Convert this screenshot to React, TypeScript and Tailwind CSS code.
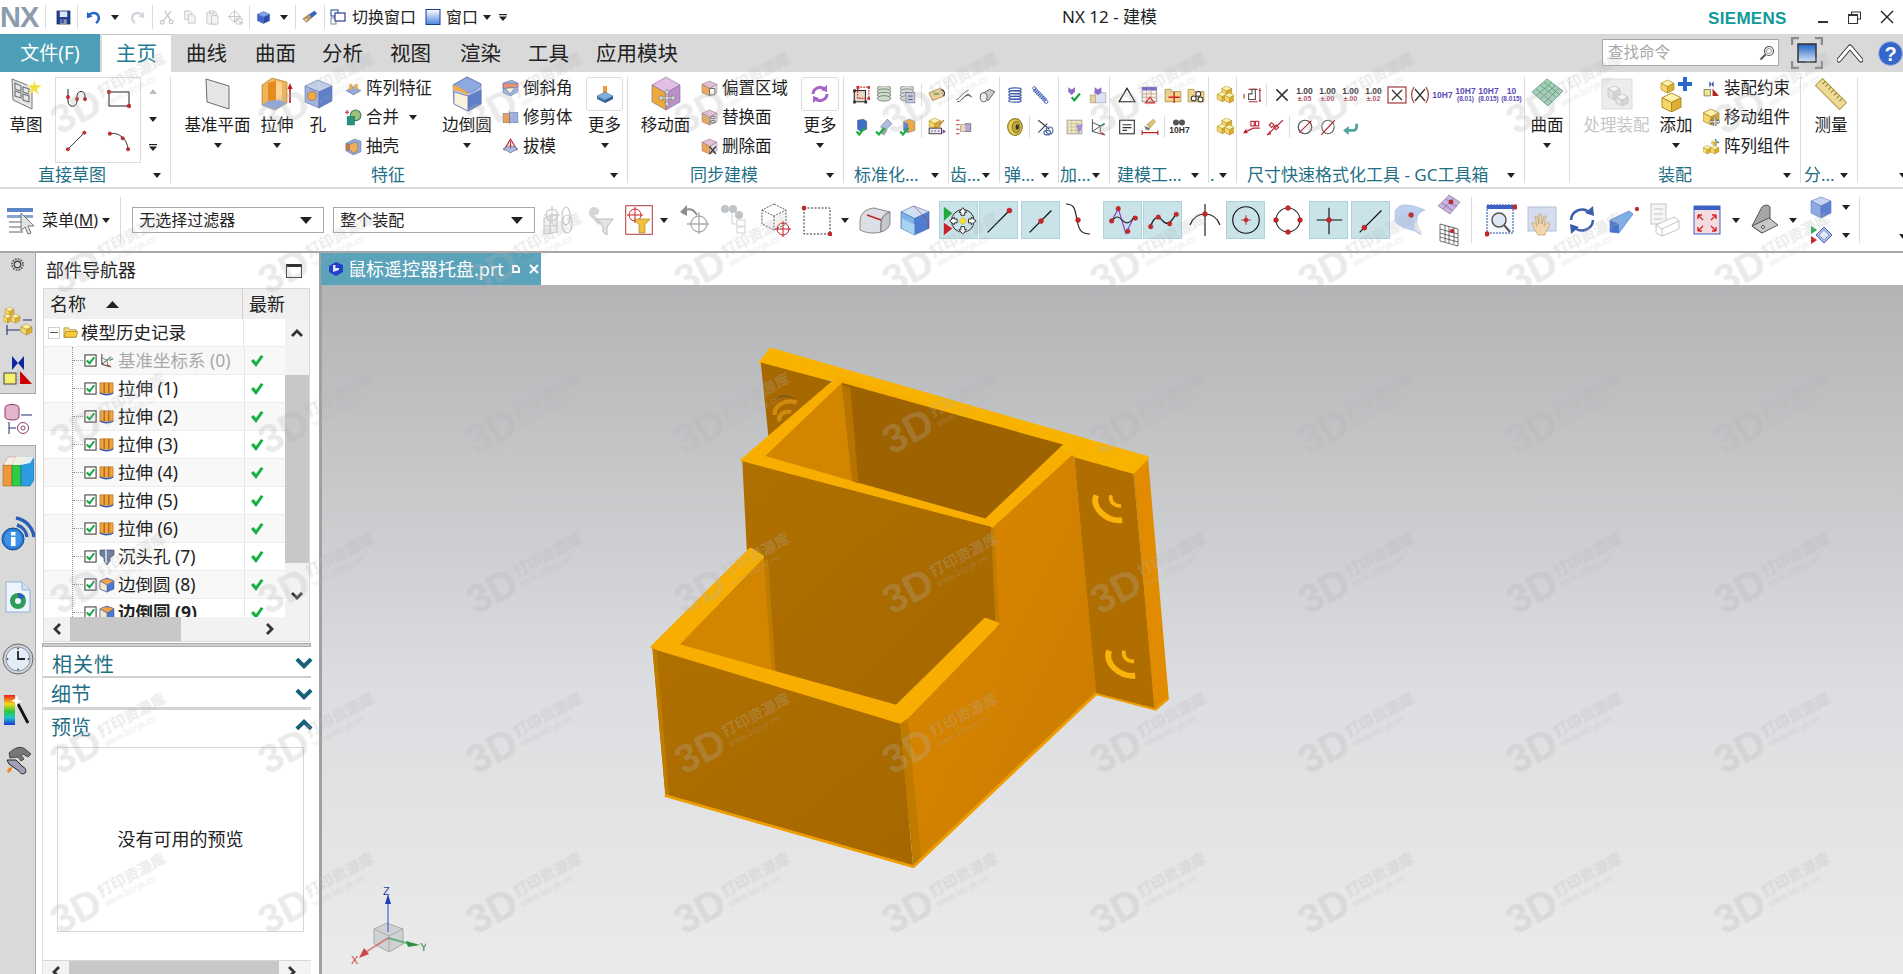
import React, { ReactNode } from "react";

type P = { className?: string; s?: number; h?: number };
const mk =
  (vb: number, def: number, body: ReactNode) =>
  ({ className = "", s = def }: P) =>
    (
      <svg width={s} height={s} viewBox={`0 0 ${vb} ${vb}`} className={"shrink-0 block " + className}>
        {body}
      </svg>
    );
const mr =
  (w: number, h: number, body: ReactNode) =>
  ({ className = "" }: P) =>
    (
      <svg width={w} height={h} viewBox={`0 0 ${w} ${h}`} className={"shrink-0 block " + className}>
        {body}
      </svg>
    );

const cube = (t: string, l: string, r: string, e = "#4a5a80") => (
  <g stroke={e} strokeWidth=".5" strokeLinejoin="round">
    <polygon points="8,1.5 14.5,4.5 8,7.5 1.5,4.5" fill={t} />
    <polygon points="1.5,4.5 8,7.5 8,14.5 1.5,11.5" fill={l} />
    <polygon points="8,7.5 14.5,4.5 14.5,11.5 8,14.5" fill={r} />
  </g>
);
const dot = (x: number, y: number, r = 1.2) => <circle cx={x} cy={y} r={r} fill="#c62828" stroke="#8a1a1a" strokeWidth=".3" />;
const chk = (x = 0, y = 0, c = "#1cae45") => (
  <path d={`M${x + 1} ${y + 4}l2.4 2.6 5-6`} fill="none" stroke={c} strokeWidth="2" />
);

/* ---- title bar ---- */
const Save = mk(16, 15, <g><rect x="1" y="1" width="14" height="14" fill="#1f3f8f" stroke="#13285c" strokeWidth=".6" /><rect x="4" y="1.5" width="8" height="6" fill="#dfe6f2" /><rect x="4.5" y="10" width="7" height="5" fill="#8b97ad" /><rect x="6" y="10.5" width="2" height="3.5" fill="#1f3f8f" /></g>);
const Undo = mk(16, 15, <g><path d="M3 5.5C6 2 12 2.5 13.5 7c.7 2.5-.6 5-2.7 7" fill="none" stroke="#2466c4" strokeWidth="2.6" /><polygon points="1,2 7,7 1,9" fill="#2466c4" /></g>);
const Redo = mk(16, 15, <g><path d="M13 5.5C10 2 4 2.5 2.5 7c-.7 2.5.6 5 2.7 7" fill="none" stroke="#d3d8de" strokeWidth="2.6" /><polygon points="15,2 9,7 15,9" fill="#d3d8de" /></g>);
const Sciss = mk(16, 15, <g fill="none" stroke="#c3c6c9" strokeWidth="1.3"><path d="M13 1L5 11M6 1l6 9" /><circle cx="3.5" cy="13" r="2" /><circle cx="13" cy="12.5" r="2" /></g>);
const CopyI = mk(16, 14, <g fill="#f3f3f3" stroke="#c4c6c8" strokeWidth="1"><path d="M2 1h6l2 2v8H2z" /><path d="M6 5h6l2 2v8H6z" /></g>);
const PasteI = mk(16, 15, <g fill="#f4f4f4" stroke="#c4c6c8" strokeWidth="1"><rect x="2" y="2" width="10" height="13" rx="1" /><rect x="5" y="1" width="4" height="3" /><path d="M7 6h7v9H7z" /></g>);
const PasteT = mk(16, 15, <g fill="none" stroke="#bfc2c5" strokeWidth="1"><circle cx="7" cy="7" r="5" /><path d="M7 0v14M0 7h14" /><path d="M9 9h6v6H9zM10 10l4 4M14 12v2h-2" /></g>);
const TinyCube = mk(16, 15, cube("#7fa6ea", "#3e67c9", "#2a4cac", "#4866b4"));
const Brush = mk(18, 16, <g><polygon points="1,11 8,6 11,10 5,15" fill="#b79a66" stroke="#6b5530" strokeWidth=".5" /><polygon points="8,6 14,2 17,5 11,10" fill="#3a62c0" /><rect x="3" y="11" width="3" height="2" fill="#e3d3ad" /></g>);
const SwitchW = mk(16, 16, <g fill="#fff" strokeWidth="1.1"><rect x="1" y="1" width="7" height="6" stroke="#2d4fa3" /><rect x="1" y="9" width="5" height="6" stroke="#8b8f99" /><rect x="5" y="4" width="10" height="8" stroke="#16328a" /></g>);
const WinI = mk(16, 16, <g><defs><linearGradient id="wg" x1="0" y1="0" x2="0" y2="1"><stop offset="0" stopColor="#fff" /><stop offset="1" stopColor="#4d86e0" /></linearGradient></defs><rect x="1" y="0.5" width="14" height="15" fill="url(#wg)" stroke="#1c3b8d" /></g>);
const Caret = ({ className = "", c = "#222" }: { className?: string; c?: string }) => (
  <svg width="8" height="5" viewBox="0 0 8 5" className={"shrink-0 block " + className}><polygon points="0,0 8,0 4,5" fill={c} /></svg>
);
const More = ({ className = "" }: { className?: string }) => (
  <svg width="8" height="7" viewBox="0 0 8 7" className={"shrink-0 block " + className}><rect width="8" height="1.2" fill="#222" /><polygon points="0,2.5 8,2.5 4,7" fill="#222" /></svg>
);

/* ---- big ribbon icons ---- */
const SketchI = mk(32, 32, <g><polygon points="2,1 22,9 22,31 3,22" fill="#e5e6e7" stroke="#777" strokeWidth="1" /><g fill="none" stroke="#777" strokeWidth="1.2"><polygon points="5,5 11,8 11,13 5,11" /><polygon points="13,9 19,11 19,16 13,14" /><polygon points="5,13 11,15 11,20 5,18" /><polygon points="13,16 19,18 19,24 13,22" /></g><polygon points="24,1 26,7 32,7 27,11 29,17 24,13 19,16 21,10 17,7 23,7" fill="#f4df3b" stroke="#fff" strokeWidth=".5" /></g>);
const DatumI = mk(32, 32, <polygon points="4,1 27,8 27,31 5,24" fill="#e4e6e4" stroke="#6b6f6b" strokeWidth="1" />);
const ExtrI = mk(34, 34, <g><polygon points="2,8 12,1 27,5 27,26 15,33 2,28" fill="#f0b454" stroke="#9c7329" strokeWidth=".6" /><polygon points="8,6 16,4 16,30 8,28" fill="#e58b22" /><polygon points="16,4 22,6 22,28 16,30" fill="#f9d493" /><polygon points="2,28 15,33 27,26 20,23 8,24" fill="#90a8d8" /><path d="M30 26V11" stroke="#c4181e" strokeWidth="1.6" /><polygon points="27.5,12 32.5,12 30,6" fill="#c4181e" /></g>);
const HoleI = mk(30, 30, <g stroke="#5d72ad" strokeWidth=".6"><polygon points="15,1 29,7 16,13 2,7" fill="#c4d2ef" /><polygon points="2,7 16,13 16,29 2,23" fill="#9fb3e0" /><polygon points="16,13 29,7 29,22 16,29" fill="#5f7fc8" /><circle cx="9" cy="17" r="4.5" fill="#f2a93b" stroke="#a55" /></g>);
const BlendI = mr(32, 36, <g stroke="#5d72ad" strokeWidth=".7"><polygon points="16,1 30,8 30,28 17,35 3,28 2,9" fill="#b4c5ea" /><path d="M2 9L16 1l14 7c-1 4-6 7-13 9z" fill="#8ea8e0" /><path d="M2 9c5 1 10 4 15 8v3C12 16 7 14 2.5 15z" fill="#f4ae47" stroke="none" /><polygon points="17,20 30,14 30,28 17,35" fill="#5f7fc8" /><polygon points="3,16 17,20 17,35 3,28" fill="#f8f2df" /></g>);
const MoveFaceI = mr(34, 36, <g stroke="#7b6a9c" strokeWidth=".6"><polygon points="17,1 31,9 17,17 3,9" fill="#e4bfe4" /><polygon points="3,9 17,17 17,34 3,26" fill="#efa93a" /><polygon points="17,17 31,9 31,26 17,34" fill="#bd8fcd" /><path d="M18 13l3 4h-2v4h4v-2l4 3-4 3v-2h-4v4h2l-3 4-3-4h2v-4h-4v2l-4-3 4-3v2h4v-4h-2z" fill="#d4d4d8" stroke="#777" /></g>);
const MoreBI = mk(20, 20, <g><rect x="8" y="2" width="4" height="7" fill="#ef9a3c" /><polygon points="2,12 10,8 18,12 10,16" fill="#7eb0dd" stroke="#456" strokeWidth=".4" /><polygon points="2,12 10,16 10,19 2,15" fill="#3f6fae" /><polygon points="18,12 10,16 10,19 18,15" fill="#2e5a95" /></g>);
const SyncI = mk(20, 20, <g fill="none" stroke="#a565c5" strokeWidth="3"><path d="M3 10a7 7 0 0 1 12-4.5" /><path d="M17 10a7 7 0 0 1-12 4.5" /><polygon points="17,1 17,8 11,6" fill="#a565c5" stroke="none" /><polygon points="3,19 3,12 9,14" fill="#a565c5" stroke="none" /></g>);
const SurfI = mk(32, 32, <g><polygon points="1,14 16,1 32,13 17,28" fill="#a6d0b8" stroke="#5d9a7c" strokeWidth=".8" /><g stroke="#4d9270" strokeWidth=".7"><path d="M5 11l16 13M9 7l16 12M13 4l16 13M5 18L21 4M9 21L25 7M13 25L28 10" /></g></g>);
const ProcI = mk(32, 32, <g><rect x="1" y="1" width="30" height="30" fill="#ececec" stroke="#dcdcdc" /><g stroke="#c5c5c5" strokeWidth=".8"><polygon points="7,11 13,8 19,11 13,14" fill="#f5f5f5" /><polygon points="7,11 13,14 13,22 7,19" fill="#e2e2e2" /><polygon points="13,14 19,11 19,19 13,22" fill="#d5d5d5" /><polygon points="15,19 21,16 27,19 21,22" fill="#f5f5f5" /><polygon points="15,19 21,22 21,28 15,25" fill="#e2e2e2" /><polygon points="21,22 27,19 27,25 21,28" fill="#d5d5d5" /></g></g>);
const yc = (x: number, y: number, k = 1) => (
  <g transform={`translate(${x} ${y}) scale(${k})`} stroke="#a88a2a" strokeWidth=".5">
    <polygon points="5,0 10,2.5 5,5 0,2.5" fill="#fff0a8" />
    <polygon points="0,2.5 5,5 5,10 0,7.5" fill="#f6d765" />
    <polygon points="5,5 10,2.5 10,7.5 5,10" fill="#dcae32" />
  </g>
);
const AddI = mr(34, 36, <g>{yc(2, 4, 1.3)}{yc(3, 17, 1.9)}<path d="M26 1v14M19 8h14" stroke="#2a66c9" strokeWidth="4" /></g>);
const RulerI = mk(32, 32, <g transform="rotate(45 16 16)"><rect x="-1" y="11" width="34" height="10" fill="#eddc98" stroke="#b39c45" /><g stroke="#907a2a" strokeWidth="1">{[3, 7, 11, 15, 19, 23, 27].map((x) => <path key={x} d={`M${x} 11v4`} />)}</g></g>);

/* ---- small ribbon icons ---- */
const PatFeat = mk(16, 17, <g><polygon points="1,10 8,6 15,10 8,14" fill="#8ea9dd" stroke="#556" strokeWidth=".4" /><rect x="4" y="4" width="3" height="5" fill="#eda849" /><rect x="9" y="4" width="3" height="5" fill="#eda849" /></g>);
const Unite = mk(16, 17, <g><path d="M0 3h4M2 1v4" stroke="#c82a2a" strokeWidth="1" /><circle cx="10" cy="6" r="5" fill="#9fc07a" stroke="#2b7a6b" /><rect x="2" y="7" width="7" height="8" fill="#2a8f80" stroke="#175" strokeWidth=".5" /></g>);
const Shell = mk(16, 17, <g stroke="#5c6c95" strokeWidth=".5"><polygon points="1,5 9,1 15,3 15,13 8,16 1,12" fill="#93aada" /><polygon points="4,6 9,4 12,5 12,12 8,14 4,11" fill="#f0ad55" /><polygon points="1,5 4,6 4,11 1,12" fill="#e07a28" /></g>);
const Chamfer = mk(16, 17, <g stroke="#556a9a" strokeWidth=".5"><polygon points="1,3 9,0 15,3 15,11 8,15 1,12" fill="#9fb5e2" /><polygon points="1,3 15,3 15,7 1,8" fill="#e88f7a" /><polygon points="3,8 12,7 8,13" fill="#f6f0d6" /></g>);
const Trim = mk(16, 17, <g stroke="#6a6a8a" strokeWidth=".4"><rect x="1" y="4" width="7" height="9" fill="#eaa253" /><rect x="7" y="3" width="8" height="10" fill="#9fb0df" /><path d="M7 2v13" stroke="#b24" strokeDasharray="2 1" /></g>);
const Draft = mk(16, 17, <g fill="none"><polygon points="8,1 14,11 2,11" stroke="#b24" fill="#f3e7e7" /><polygon points="1,10 8,7 15,10 8,14" fill="#a8bde6" stroke="#557" strokeWidth=".5" /><path d="M8 3v7" stroke="#c33" /></g>);
const hexFace = (e: ReactNode) => (
  <g>
    <g stroke="#8a6c6c" strokeWidth=".5"><polygon points="8,1 15,4 8,8 1,4" fill="#e4c0d8" /><polygon points="1,4 8,8 8,15 1,12" fill="#efa856" /><polygon points="8,8 15,4 15,12 8,15" fill="#e8dbe6" /></g>
    {e}
  </g>
);
const OffsetR = mk(16, 17, hexFace(<path d="M8 8h5v6H8z" fill="#fff" stroke="#555" strokeWidth=".8" />));
const ReplF = mk(16, 17, hexFace(<path d="M9 7h4v2H9zM9 11h4v2H9z" fill="#fff" stroke="#555" strokeWidth=".8" />));
const DelF = mk(16, 17, hexFace(<path d="M8 8l6 7M14 8l-6 7" stroke="#444" strokeWidth="1.5" />));
const AssemC = mk(16, 17, <g><polygon points="6,1 8,4 10,1 10,7 8,4 6,7" fill="#2c4aa8" /><rect x="1" y="9" width="6" height="6" fill="#f1e488" stroke="#555" strokeWidth=".6" /><polygon points="9,15 15,15 9,8" fill="#b5211f" /></g>);
const MoveC = mk(16, 17, <g>{yc(0, 0, 1.5)}<path d="M11 7l2 2h-1v2h2v-1l2 2-2 2v-1h-2v2h1l-2 2-2-2h1v-2H8v1l-2-2 2-2v1h2V9H9z" fill="#ddd" stroke="#333" strokeWidth=".5" /></g>);
const PatC = mk(16, 17, <g>{yc(0, 7, .8)}{yc(7, 7, .8)}<path d="M12 1v6M9 4h6" stroke="#2a66c9" strokeWidth="1.2" />{yc(8, 2, .5)}</g>);
const discs = (a: string, b: string) => [2, 5, 8, 11].map((y) => <ellipse key={y} cx="8" cy={y} rx="6" ry="2.4" fill={a} stroke={b} strokeWidth=".7" />);

const S1 = mk(16, 18, <g><rect x="2" y="4" width="10" height="10" fill="#e8d6c4" stroke="#333" /><rect x="5" y="1" width="10" height="10" fill="none" stroke="#c4282c" strokeDasharray="1.5 1" />{[[1,3],[1,13],[11,13],[4,0],[14,0],[14,10]].map(([x,y],i)=><rect key={i} x={x} y={y} width="2.5" height="2.5" fill={i<3?"#333":"#c4282c"} />)}</g>);
const S2 = mk(16, 18, <g>{discs("#cfdccb", "#62715f")}</g>);
const S3 = mk(16, 18, <g>{discs("#d7dbd6", "#777")}<rect x="7" y="6" width="8" height="9" fill="#c5cbec" stroke="#667" strokeWidth=".5" /><path d="M9 9h4M9 12h4" stroke="#556" /></g>);
const S4 = mk(16, 18, <g><polygon points="1,6 11,2 14,9 4,13" fill="#edd199" stroke="#a07c34" strokeWidth=".7" /><rect x="5" y="6" width="5" height="2" fill="#8a6" /><path d="M12 3c3 1 3 4 2 6" stroke="#222" fill="none" /></g>);
const S5 = mk(16, 18, <g><polygon points="5,2 10,1 13,3 13,10 8,12 5,10" fill="#3e6fc9" stroke="#234" strokeWidth=".4" />{chk(3, 8)}</g>);
const S6 = mk(16, 18, <g><polygon points="5,8 11,1 15,5 9,11" fill="#aebfe6" stroke="#557" strokeWidth=".5" /><rect x="6" y="9" width="4" height="6" fill="#a2a2a2" transform="rotate(30 8 12)" />{chk(0, 8)}</g>);
const S7 = mk(16, 18, <g><polygon points="5,3 10,1 15,3 15,11 9,13 5,11" fill="#efa84b" stroke="#667" strokeWidth=".4" /><polygon points="5,3 9,5 9,13 5,11" fill="#4f7ecb" />{chk(1, 8)}</g>);
const S8 = mk(16, 18, <g>{yc(1, 0, 1)}<rect x="1" y="9" width="11" height="5" fill="#e9e3f4" stroke="#333" strokeWidth=".8" /><path d="M3 11.5h1M6 11.5h1M9 11.5h1" stroke="#333" /><polygon points="13,10 16,12 13,14" fill="#8a3fa6" /><path d="M10 6l4-4" stroke="#b98a2e" strokeWidth="1.5" /></g>);
const S9 = mk(16, 18, <g fill="none" stroke="#555" strokeWidth=".8"><path d="M1 12c3 0 3-3 6-5s3-3 5-3M2 14c3 0 4-2 7-5l4-1 2 2" /><path d="M6 12c2-2 3-4 6-5l2 3" /></g>);
const S10 = mk(16, 18, <g stroke="#444" strokeWidth=".7"><polygon points="2,8 10,3 15,5 9,13" fill="#c8c8c8" /><ellipse cx="5" cy="10" rx="3" ry="4" fill="#eee" /></g>);
const S11 = mk(16, 18, <g><path d="M1 2h3M1 6h3M1 10h3M1 14h3" stroke="#b33" /><path d="M5 6h4v-1h5v7H5z" fill="#b9a6d9" stroke="#443" strokeWidth=".5" /><path d="M5 6h4v6H5z" fill="#ebd9b3" /></g>);
const S12 = mk(16, 18, <g>{[3, 5.5, 8, 10.5, 13].map((y) => <ellipse key={y} cx="8" cy={y} rx="5.5" ry="1.3" fill="none" stroke="#3f5aa8" strokeWidth="1.1" />)}</g>);
const S13 = mk(16, 18, <g fill="none" stroke="#3f5fb5"><path d="M3 3l10 10" strokeWidth="4" strokeDasharray="1.3 .6" /><circle cx="3" cy="2" r="1.5" strokeWidth=".8" /><circle cx="13.5" cy="14" r="1.5" strokeWidth=".8" /></g>);
const S14 = mk(16, 18, <g><ellipse cx="8" cy="8" rx="6.5" ry="7.5" fill="#e7cf5e" stroke="#8a7a22" /><ellipse cx="9" cy="8" rx="3.5" ry="5" fill="#c4aa36" stroke="#8a7a22" /><ellipse cx="10" cy="8" rx="1.5" ry="2.5" fill="#333" /></g>);
const S15 = mk(16, 18, <g fill="none" stroke="#4d6aa8"><path d="M2 2l10 8M2 13L10 5" stroke="#444" /><ellipse cx="12" cy="11" rx="3" ry="3" /><ellipse cx="10" cy="13" rx="3" ry="2" /></g>);
const S16 = mk(16, 18, <g><polygon points="2,1 5,3 8,1 8,5 5,8 2,5" fill="#8a6fc9" />{chk(4, 6, "#1aa84a")}</g>);
const S17 = mk(16, 18, <g><rect x="5" y="6" width="10" height="9" fill="#dce3f2" stroke="#99a" strokeWidth=".5" /><rect x="1" y="8" width="5" height="7" fill="#e8d09a" stroke="#a98" strokeWidth=".5" /><polygon points="5,1 8,3 11,1 11,6 8,8 5,6" fill="#8a6fc9" /></g>);
const S18 = mk(16, 18, <g><rect x="1" y="2" width="13" height="12" fill="#f1e9b8" stroke="#aaa" /><path d="M1 5h13M1 8h13M1 11h13M5 2v12M9 2v12" stroke="#bcb9a2" strokeWidth=".6" /><polygon points="9,6 15,6 13,11 11,14" fill="#a38fd6" /></g>);
const S19 = mk(16, 18, <g fill="none" stroke="#444" strokeWidth=".8"><path d="M3 1v11l11 3M3 12l10-7" /><path d="M3 4l7 3v6" /><path d="M11 7l3-2" stroke="#2a9a4a" strokeWidth="1.5" /><path d="M11 13l3 2" stroke="#c33" strokeWidth="1.5" /></g>);
const S20 = mk(16, 18, <polygon points="8,2 15,14 1,14" fill="#fff" stroke="#222" strokeWidth="1.1" />);
const S21 = mk(16, 18, <g><rect x="1" y="1" width="13" height="13" fill="#fbf4e6" stroke="#777" strokeWidth=".6" /><rect x="1" y="1" width="13" height="3" fill="#7a66c4" /><path d="M1 7h13M1 10h13M5 4v10M9 4v10" stroke="#a77" strokeWidth=".5" /><polygon points="8,10 12,15 4,15" fill="none" stroke="#c22" /></g>);
const S22 = mk(16, 18, <g><path d="M1 3h5l1 2h8v9H1z" fill="#eed58f" stroke="#a98b3d" strokeWidth=".7" /><path d="M9 5v10M4 10h10" stroke="#c22" strokeWidth="1.2" /></g>);
const S23 = mk(16, 18, <g><path d="M1 3h5l1 2h8v9H1z" fill="#eed58f" stroke="#a98b3d" strokeWidth=".7" /><g fill="#fff" stroke="#333" strokeWidth=".9"><circle cx="10" cy="7" r="2.2" /><circle cx="6" cy="11" r="2.2" /><circle cx="12" cy="12" r="2.2" /></g></g>);
const S24 = mk(16, 18, <g><rect x="1.5" y="2" width="13" height="12" fill="#fff" stroke="#333" /><path d="M4 6h8M4 8.5h8M4 11h4" stroke="#333" /></g>);
const S25 = mk(16, 18, <g><polygon points="5,6 11,1 13,3 8,9" fill="#d9c478" stroke="#8a7a33" strokeWidth=".4" /><polygon points="3,7 8,9 7,11 4,10" fill="#777" /><path d="M1 13h14M1 11v4M15 11v4" stroke="#b22" /></g>);
const Binoc = mr(16, 7, <g fill="#555"><circle cx="5" cy="3.5" r="3" /><circle cx="11" cy="3.5" r="3" /></g>);
const S27 = mk(16, 18, <g>{yc(5, 0, .9)}{yc(1, 5, .9)}{yc(7.5, 6, .9)}</g>);
const G1 = mk(16, 18, <g fill="none" stroke="#a33"><path d="M5 3h8M5 14h8M1 7v4M15 2v12M14 4h2M14 13h2" /><path d="M5 12V7h3V3h3v9z" stroke="#555" /></g>);
const G2 = mk(16, 18, <path d="M3 3l10 10M13 3L3 13" stroke="#333" strokeWidth="1.3" />);
const G3 = mk(20, 20, <g><rect x="1" y="2" width="18" height="16" fill="#fff" stroke="#a23a3a" strokeWidth="1.2" /><path d="M5 5l10 10M15 5L5 15" stroke="#333" strokeWidth="1.3" /></g>);
const G4 = mk(20, 20, <g fill="none"><path d="M4 2C1 7 1 13 4 18M16 2c3 5 3 11 0 16" stroke="#a23a3a" strokeWidth="1.2" /><path d="M5 4l10 12M15 4L5 16" stroke="#333" strokeWidth="1.3" /></g>);
const R1 = mk(16, 18, <g fill="none" stroke="#b23"><path d="M1 13l8-4h6M3 10l-2 3 3 0" /><rect x="7" y="3" width="3" height="4" /><rect x="11" y="3" width="3" height="4" /></g>);
const R2 = mk(16, 18, <g fill="none" stroke="#b23"><path d="M1 15L15 2" /><rect x="4" y="5" width="3" height="3" transform="rotate(-45 5 7)" /><rect x="8" y="7" width="3" height="3" transform="rotate(-45 9 9)" /><path d="M1 15l3-1-1-2" /></g>);
const R3 = mk(16, 18, <g fill="none"><circle cx="8" cy="8" r="6" stroke="#555" strokeWidth="1.1" /><path d="M3 13L13 3" stroke="#b23" /><polygon points="13,3 14,2 13,5 11,3" fill="#b23" /></g>);
const R4 = mk(16, 18, <g fill="none"><ellipse cx="8" cy="8" rx="5.5" ry="6" stroke="#666" /><path d="M2 15L14 2" stroke="#b23" /></g>);
const R5 = mk(16, 18, <g><path d="M4 11h6a3 3 0 0 0 3-3V5" fill="none" stroke="#4fa79c" strokeWidth="2.5" /><polygon points="1,11 6,7 6,15" fill="#4fa79c" /></g>);

/* ---- gallery ---- */
const GalA = mk(24, 24, <g><path d="M3 2v12c0 7 9 7 9 0v-5c0-6 8-6 8 0v5" fill="none" stroke="#222" />{dot(3, 10, 1.8)}{dot(12, 12, 1.8)}{dot(20, 12, 1.8)}</g>);
const GalB = mr(24, 20, <g><rect x="2" y="3" width="20" height="14" fill="none" stroke="#222" />{dot(2, 3, 2)}{dot(22, 17, 2)}</g>);
const GalC = mk(24, 22, <g><path d="M2 21L20 3" stroke="#222" />{dot(2, 21, 2)}{dot(20, 3, 2)}</g>);
const GalD = mk(24, 22, <g><path d="M2 4c10-2 19 6 20 17" fill="none" stroke="#222" />{dot(2, 4, 2)}{dot(16, 9, 2)}{dot(22, 21, 2)}</g>);

/* ---- toolbar ---- */
const MenuI = mk(32, 32, <g><rect x="1" y="4" width="26" height="4" fill="#5b87c9" /><rect x="1" y="11" width="26" height="3" fill="#88a4cf" /><path d="M3 18h14M3 23h14M3 28h14" stroke="#999" strokeWidth="1.5" /><polygon points="15,9 15,27 19,23 22,30 25,29 22,22 28,22" fill="#dfe1e3" stroke="#777" /></g>);
const T1 = mk(32, 32, <g fill="none" stroke="#c8cacc" strokeWidth="1.2"><polygon points="1,14 14,10 14,28 1,30" fill="#f1f1f1" /><path d="M1 22h13M7 12v18" /><circle cx="9" cy="11" r="6" /><path d="M9 2v18M1 11h16" /><ellipse cx="23" cy="12" rx="4" ry="9" /><ellipse cx="24" cy="20" rx="5" ry="9" /></g>);
const T2 = mr(26, 30, <g fill="#d4d6d8"><path d="M1 6c2-5 7-5 9-2 3 2 0 7-4 6 3 3 5 5 7 8l-3 2c-3-4-5-6-7-8-2-1-2-3-2-6z" /><polygon points="9,14 25,14 19,22 19,30 15,27 15,22" stroke="#bbb" fill="#e2e3e4" /></g>);
const T3 = mr(28, 30, <g><rect x=".7" y=".7" width="26.6" height="28.6" fill="#fff" stroke="#b23a3a" strokeWidth="1" /><circle cx="10" cy="10" r="6" fill="none" stroke="#c22" /><path d="M10 2v16M2 10h16" stroke="#c22" /><polygon points="9,14 25,14 20,20 20,28 14,28 14,20" fill="#f0bf3d" stroke="#8a6c22" strokeWidth=".5" /></g>);
const T4 = mr(30, 34, <g fill="none" stroke="#aaa" strokeWidth="1.3"><circle cx="20" cy="21" r="8" /><path d="M20 9v22M8 21h22" /><path d="M4 11C7 4 14 5 18 12" stroke="#8d8d8d" strokeWidth="2" /><polygon points="8,2 8,13 1,9" fill="#8d8d8d" stroke="none" /></g>);
const T5 = mr(30, 34, <g><g fill="#c0c4c8"><circle cx="5" cy="6" r="4" /><circle cx="13" cy="6" r="4" /><circle cx="19" cy="12" r="4" /></g><g fill="none" stroke="#cfd1d3"><rect x="17" y="17" width="8" height="6" /><rect x="17" y="24" width="8" height="6" /><path d="M12 9v12h5" /></g></g>);
const T6 = mr(31, 36, <g fill="none" stroke="#333" strokeWidth=".8" strokeDasharray="2 1.2"><polygon points="14,2 26,8 26,22 14,28 2,22 2,8" /><path d="M2 8l12 6 12-6M14 14v14" /><g stroke="#c4181e" strokeDasharray="0" strokeWidth="1"><circle cx="23" cy="27" r="6" /><path d="M23 19v16M15 27h16" /></g></g>);
const T7 = mr(31, 32, <g><rect x="3" y="4" width="26" height="26" fill="none" stroke="#333" strokeDasharray="2 1.5" />{dot(3, 4, 2.2)}{dot(29, 30, 2.2)}</g>);
const T8 = mk(32, 32, <g stroke="#6c6c6c" strokeWidth=".8"><path d="M1 18c0-9 6-13 14-14l16 4c-6 2-9 6-9 13l0 7c-7 2-15 1-21-2z" fill="#dcdfe6" /><path d="M22 21c0-7 3-11 9-13v10c0 5-3 8-9 10z" fill="#c4c7cc" /><path d="M8 11l14 5" stroke="#c4202a" strokeWidth="1.5" /></g>);
const T9 = mk(32, 31, <g stroke="#4466aa" strokeWidth=".6"><polygon points="14,1 30,7 15,14 1,7" fill="#cfe0f5" /><polygon points="1,7 15,14 15,31 1,24" fill="#7fb4ea" /><polygon points="15,14 30,7 30,24 15,31" fill="#4f7ed0" /><polygon points="2,14 15,20 15,31 2,24" fill="#a9d4f0" stroke="none" /><path d="M14 1l15 15v8" stroke="#c22" fill="none" /></g>);
const H1 = mk(38, 36, <g><polygon points="3,6 12,13 3,21" fill="#1fa93f" transform="translate(0 -1)" /><polygon points="3,23 12,29 3,36" fill="#c4242a" transform="translate(0 -1)" /><circle cx="23" cy="20" r="12" fill="none" stroke="#222" /><g fill="#fff" stroke="#111" strokeWidth=".9"><polygon points="23,6 27,11 25,11 25,14 21,14 21,11 19,11" /><polygon points="23,34 27,29 25,29 25,26 21,26 21,29 19,29" /><polygon points="9,20 14,16 14,18 17,18 17,22 14,22 14,24" /><polygon points="37,20 32,16 32,18 29,18 29,22 32,22 32,24" /></g><polygon points="23,16 27,20 23,24 19,20" fill="#f6e131" stroke="#b7a322" strokeWidth=".5" /></g>);
const L1 = mk(38, 36, <g><path d="M7 32L30 9" stroke="#111" strokeWidth="1.3" />{dot(30, 9, 2.7)}</g>);
const L2 = mk(38, 36, <g><path d="M7 32L30 9" stroke="#111" strokeWidth="1.3" />{dot(19, 20, 2.7)}</g>);
const L3 = mr(28, 38, <g><path d="M1 3c9 0 9 6 11 16 2 11 5 14 13 14" fill="none" stroke="#222" strokeWidth="1.2" />{dot(13, 19, 2.5)}</g>);
const L4 = mk(38, 36, <g><path d="M7 20L14 7l8 26 9-18" fill="none" stroke="#8a37c8" strokeWidth="1.2" /><path d="M7 20c6-7 8-4 12 0s8 2 12-5" fill="none" stroke="#222" strokeWidth="1.1" />{dot(7, 20, 2.5)}{dot(14, 7, 2.5)}{dot(24, 31, 2.5)}{dot(32, 17, 2.5)}</g>);
const L5 = mk(38, 36, <g><path d="M6 26c2-8 7-12 10-9s5 7 9 5 6-7 8-10" fill="none" stroke="#222" strokeWidth="1.3" />{dot(6, 26, 2.5)}{dot(14, 16, 2.5)}{dot(26, 23, 2.5)}{dot(33, 13, 2.5)}</g>);
const L6 = mr(32, 38, <g fill="none" stroke="#222" strokeWidth="1.2"><path d="M16 3v32" /><path d="M1 24c3-8 9-11 15-11s12 3 15 11" />{dot(16, 13, 2.5)}</g>);
const L7 = mk(38, 36, <g><circle cx="19" cy="19" r="14" fill="none" stroke="#111" strokeWidth="1.2" /><path d="M19 14v10M14 19h10" stroke="#c22" />{dot(19, 19, 2.2)}</g>);
const L8 = mr(30, 32, <g><circle cx="15" cy="16" r="12" fill="none" stroke="#333" strokeWidth="1.1" />{dot(15, 4, 2.5)}{dot(3, 16, 2.5)}{dot(27, 16, 2.5)}{dot(15, 28, 2.5)}</g>);
const L9 = mk(38, 36, <g><path d="M19 6v28M6 19h27" stroke="#111" strokeWidth="1.2" />{dot(19, 19, 2.7)}</g>);
const L10 = mk(38, 36, <g><path d="M7 32L30 9" stroke="#111" strokeWidth="1.2" />{dot(12, 27, 2.7)}</g>);
const Surf2 = mr(32, 34, <g><path d="M1 8c3-5 7-7 12-6 5 0 11 2 18 5-5 2-8 5-8 10 0 7 2 11 4 15l-6-4c-9-2-17-5-20-10z" fill="#bcd0ed" stroke="#9db5d8" strokeWidth=".5" /><path d="M22 17c2 4 4 10 7 14l-8-4c-1-4 0-7 1-10z" fill="#e3e3e3" />{dot(17, 12, 2.5)}</g>);
const TopA = mr(24, 21, <g><polygon points="1,12 12,1 23,8 13,20" fill="#c9b2de" stroke="#667" strokeWidth=".5" /><path d="M5 9l11 8M9 5l11 8M6 15L17 4" stroke="#6c6ca8" strokeWidth=".7" />{dot(14, 8, 2.2)}</g>);
const TopB = mr(20, 24, <g fill="#fff" stroke="#333" strokeWidth=".7"><polygon points="1,1 19,6 19,23 1,18" /><path d="M1 6l18 5M1 10l18 5M1 14l18 5M6 2v17M10 3v17M15 4v17" />{dot(13, 8, 2)}</g>);
const Z1 = mr(32, 34, <g><rect x="2" y="2" width="26" height="28" fill="#f6f9fd" stroke="#224aa8" strokeDasharray="2 1" /><rect x="2" y="2" width="26" height="4" fill="#3b62c2" /><circle cx="14" cy="17" r="7" fill="#dfe7f2" stroke="#555" strokeWidth="1.5" /><path d="M19 22l6 7" stroke="#555" strokeWidth="2" />{dot(30, 4, 2.4)}{dot(2, 31, 2.4)}</g>);
const Z2 = mr(30, 32, <g><rect x="1" y="3" width="28" height="24" fill="#d5dcee" stroke="#b7bfd8" /><path d="M11 31c-3-5-5-8-6-12l2-1 3 4-2-10h2l2 8 0-10h2l1 10 2-8h2l-2 10 4-4 2 2c-2 4-4 8-5 11z" fill="#f1d6ac" stroke="#a58655" strokeWidth=".5" /></g>);
const Z3 = mr(30, 32, <g fill="none" stroke="#3b5dad" strokeWidth="2.5"><path d="M4 16A11 11 0 0 1 23 9" /><path d="M26 16A11 11 0 0 1 7 23" /><polygon points="26,2 27,12 18,9" fill="#3b5dad" stroke="none" /><polygon points="4,30 3,20 12,23" fill="#3b5dad" stroke="none" /></g>);
const Z4 = mr(30, 32, <g><polygon points="1,16 20,7 24,10 10,29 1,28" fill="#7eb0e8" stroke="#4a6cbf" strokeWidth=".6" /><polygon points="1,16 10,20 10,29 1,28" fill="#4a74cc" />{dot(28, 5, 2)}</g>);
const Z5 = mr(30, 34, <g fill="none" stroke="#c4c6c8"><rect x="1" y="1" width="15" height="20" fill="#f5f5f5" /><path d="M4 6h9M4 11h9M4 16h9" /><polygon points="6,22 24,14 29,18 29,26 12,33 6,30" fill="#fff" /><path d="M6 22l6 4v7M12 26l17-8" /></g>);
const Z6 = mr(28, 32, <g><rect x="1" y="2" width="26" height="28" fill="#f2dce0" stroke="#3b62c2" /><rect x="1" y="2" width="26" height="4" fill="#3b62c2" /><path d="M5 11l5 5M5 11h4M5 11v4M23 11l-5 5M23 11h-4M23 11v4M5 27l5-5M5 27h4M5 27v-4M23 27l-5-5M23 27h-4M23 27v-4" stroke="#d22" strokeWidth="1.4" fill="none" /></g>);
const Z7 = mr(30, 32, <g stroke="#555" strokeWidth="1"><path d="M2 22L12 3c2-2 6-3 8 0l0 12-8 14z" fill="#a4a6a8" /><polygon points="2,22 12,29 28,21 19,14" fill="#c5c7c9" /><circle cx="13" cy="23" r="1.5" fill="#eee" /></g>);
const Z8 = mk(24, 24, <g stroke="#5d7bc0" strokeWidth=".6"><polygon points="12,2 22,6 12,11 2,6" fill="#c4d4f2" /><polygon points="2,6 12,11 12,23 2,18" fill="#8fa9e2" /><polygon points="12,11 22,6 22,18 12,23" fill="#607fcf" /></g>);
const Z9 = mr(24, 20, <g><polygon points="2,1 8,5 2,9" fill="#1fa93f" /><polygon points="2,11 8,15 2,19" fill="#c4242a" /><polygon points="15,2 23,10 15,18 7,10" fill="#aebde6" stroke="#4560ad" /><polygon points="15,5 20,10 15,15 10,10" fill="#e5e9f6" stroke="#4560ad" strokeWidth=".5" /></g>);

/* ---- sidebar ---- */
const Gear = mk(16, 15, <g fill="none" stroke="#444"><circle cx="8" cy="8" r="3.5" strokeWidth="1.5" /><circle cx="8" cy="8" r="6" strokeWidth="1.5" strokeDasharray="1.8 1.3" /></g>);
const SB1 = mk(30, 30, <g>{yc(2, 1, .9)}{yc(0, 8, .9)}{yc(8, 8, .9)}{yc(18, 18, 1.1)}<path d="M4 19v10M4 24h13M20 14h9" stroke="#1d2e6e" strokeWidth="1.1" /></g>);
const SB2 = mk(30, 30, <g><polygon points="9,1 15,8 21,1 21,15 15,8 9,15" fill="#12279b" /><path d="M15 15v15" stroke="#999" strokeDasharray="1.5 1.5" /><rect x="1" y="18" width="12" height="11" fill="#f6f071" stroke="#444" /><polygon points="17,29 29,29 17,16" fill="#c00" /></g>);
const SB3 = mr(30, 32, <g><ellipse cx="9" cy="3.5" rx="7" ry="3" fill="#e3b5cc" stroke="#8d3a6b" /><path d="M2 4v9c0 4 14 4 14 0V4" fill="#e3b5cc" stroke="#8d3a6b" /><path d="M6 18v12M6 24h7M18 11h11" stroke="#1d2e6e" /><circle cx="20" cy="24" r="5.5" fill="#fff" stroke="#87416e" /><circle cx="20" cy="24" r="2" fill="none" stroke="#87416e" /></g>);
const SB4 = mk(32, 32, <g><polygon points="1,10 10,10 10,31 1,31" fill="#f0963b" stroke="#a05c15" strokeWidth=".5" /><polygon points="1,10 6,2 14,2 10,10" fill="#f4efe0" stroke="#a57" strokeWidth=".3" /><polygon points="10,10 19,10 19,31 10,31" fill="#2ecb45" stroke="#187a25" strokeWidth=".5" /><polygon points="10,10 14,2 23,2 19,10" fill="#eef4dc" /><polygon points="19,10 28,3 32,3 32,25 28,31 19,31" fill="#2c9be0" stroke="#135c95" strokeWidth=".5" /><polygon points="19,10 23,2 32,2 28,8" fill="#e6f0f8" /></g>);
const SB5 = mr(34, 36, <g><circle cx="12" cy="23" r="11" fill="#2b7bd3" stroke="#154b95" /><circle cx="12" cy="23" r="8.5" fill="#3f94e8" /><rect x="10" y="21" width="4.5" height="9" fill="#fff" /><rect x="10" y="16" width="4.5" height="3.5" fill="#fff" /><g fill="none" stroke="#2a5fb8" strokeWidth="3.4"><path d="M16 9a14 14 0 0 1 10 12" /><path d="M15 2a22 22 0 0 1 18 19" /></g></g>);
const SB6 = mr(26, 32, <g><path d="M1 1h16l8 8v22H1z" fill="#eef4fb" stroke="#8fb0d4" /><path d="M17 1v8h8" fill="#cfe0f2" stroke="#8fb0d4" /><circle cx="13" cy="20" r="8" fill="#2e9c57" /><path d="M13 12a8 8 0 0 1 7 4l-7 4z" fill="#2a5fb8" /><circle cx="13" cy="20" r="3" fill="#eef4fb" /></g>);
const SB7 = mk(32, 32, <g><circle cx="16" cy="16" r="15" fill="#cfd3d8" stroke="#666" /><circle cx="16" cy="16" r="12" fill="#e4ecf8" stroke="#8a93a4" /><path d="M16 8v8h7" stroke="#222" strokeWidth="1.8" fill="none" /><g fill="#355">{[[16,5.5],[16,26.5],[5.5,16],[26.5,16]].map(([x,y],i)=><circle key={i} cx={x} cy={y} r=".9" />)}</g></g>);
const SB8 = mr(28, 32, <g><defs><linearGradient id="rb" x1="0" y1="0" x2="0" y2="1"><stop offset="0" stopColor="#e3211e" /><stop offset=".3" stopColor="#f4d81e" /><stop offset=".55" stopColor="#2fc33f" /><stop offset=".75" stopColor="#22c4c8" /><stop offset="1" stopColor="#1f34d8" /></linearGradient></defs><rect x="0" y="1" width="11" height="30" fill="url(#rb)" /><path d="M14 10l10 19" stroke="#111" strokeWidth="2.8" /><polygon points="13,1 14,6 19,7 14,9 12,13 11,8 7,7 11,5" fill="#fff" /></g>);
const SB9 = mr(28, 30, <g><path d="M5 8c6-6 12-7 16-4l6 5-3 3-5-3-2 1 3 4-3 2-3-4L6 13z" fill="#777" stroke="#222" strokeWidth=".7" /><path d="M12 15l7 7c2 0 4 4 2 6-3 2-5 0-6-2L5 19 3 15z" fill="#9ea1b8" stroke="#222" /><path d="M4 28c-2-3 1-6 4-6 0 3-1 5-4 6z" fill="#f08622" /></g>);

/* ---- panel ---- */
const Chk = mk(14, 13, <g><rect x="1" y="1" width="12" height="12" fill="#fff" stroke="#222" /><path d="M3 7l3 3 5-6.5" fill="none" stroke="#11a540" strokeWidth="2.2" /></g>);
const Green = mk(14, 14, <path d="M1 7l2.5-2 2.5 3L11 1l2.5 1.5L6 13z" fill="#17b043" />);
const ExtS = mk(16, 15, <g><rect x="1" y="2" width="14" height="11" fill="#f1a53c" stroke="#a0601a" strokeWidth=".6" /><path d="M5.5 2v11M10.5 2v11" stroke="#8a4b12" /><path d="M1 13c4 2 10 2 14 0" stroke="#3357ab" strokeWidth="1.6" fill="none" /></g>);
const CsyS = mk(16, 15, <g fill="none" strokeWidth="1"><path d="M3 1v11l10 3M3 12l10-8" stroke="#333" /><path d="M3 5l6 3v5" stroke="#777" /><path d="M11 8l4-2" stroke="#2a9a4a" strokeWidth="1.4" /><path d="M8 13l4 1" stroke="#c33" strokeWidth="1.4" /></g>);
const CsHole = mk(16, 16, <g><path d="M1 1h14v5l-4 3v3l-3 4-3-4V9L1 6z" fill="#6f7f9f" stroke="#345" strokeWidth=".6" /><path d="M7 1v13" stroke="#c3cede" strokeWidth="2" /></g>);
const BlendS = mk(16, 16, <g stroke="#36528f" strokeWidth=".5"><polygon points="8,1 15,4 15,12 8,15 1,12 1,4" fill="#4c78d0" /><path d="M1 4c4-3 9-3 14 0l-7 4z" fill="#f3a24c" /><polygon points="1,4 8,8 8,15 1,12" fill="#f4e8d2" /></g>);
const Folder = mk(16, 15, <g><path d="M1 3h5l1 2h7v8H1z" fill="#f8dd7d" stroke="#8c6c12" strokeWidth=".6" /><polygon points="3,7 16,7 14,13 1,13" fill="#f7cd3c" stroke="#8c6c12" strokeWidth=".6" /></g>);
const Arrow = ({ d, className = "", w = 2.5, c = "#333", s = 13 }: { d: "u" | "d" | "l" | "r"; className?: string; w?: number; c?: string; s?: number }) => {
  const p = { u: "M2 9l5-5 5 5", d: "M2 5l5 5 5-5", l: "M9 2L4 7l5 5", r: "M5 2l5 5-5 5" }[d];
  return <svg width={s} height={s} viewBox="0 0 14 14" className={"shrink-0 block " + className}><path d={p} fill="none" stroke={c} strokeWidth={w} /></svg>;
};

/* ---- model ---- */
const Model = () => (
  <svg viewBox="0 0 1568 1568" preserveAspectRatio="none" width="580" height="560" className="absolute left-[299px] top-[46px] blur-[0.5px]">
    <defs>
      <linearGradient id="rf" x1="0" y1="0" x2="1" y2="1"><stop offset="0" stopColor="#dc8800" /><stop offset="1" stopColor="#c97b00" /></linearGradient>
      <linearGradient id="ff" x1="0" y1="0" x2="1" y2="1"><stop offset="0" stopColor="#b07000" /><stop offset="1" stopColor="#a66700" /></linearGradient>
    </defs>
    <g strokeLinejoin="round">
      <polygon points="1225,350 1385,395 1445,1060 1280,1015" fill="#b06e00" />
      <polygon points="1385,392 1405,385 1462,1045 1445,1060" fill="#c47e00" />
      <polygon points="1390,392 1422,358 1478,1030 1445,1060" fill="#e18c00" stroke="#e18c00" strokeWidth="6" />
      <polygon points="378,88 405,52 1422,355 1385,395 1215,345 595,130 540,135" fill="#f8b200" stroke="#f8b200" strokeWidth="10" />
      <polygon points="378,88 600,150 400,310" fill="#a86800" />
      <path d="M415 235c0-25 25-45 60-35M430 252c-8-15 10-30 30-25" fill="none" stroke="#d08a10" strokeWidth="12" />
      <path d="M418 190c15-12 35-10 50 0" fill="none" stroke="#6a5326" strokeWidth="3" />
      <polygon points="745,1110 1020,805 1000,545 1210,345 1225,350 1285,1015 795,1500" fill="url(#rf)" />
      <polygon points="328,362 590,130 1215,345 1000,548" fill="#f7ae00" stroke="#f7ae00" strokeWidth="10" />
      <polygon points="390,350 597,145 625,420" fill="#d28600" />
      <polygon points="597,145 1195,318 985,525 625,420" fill="#9f6200" />
      <polygon points="597,150 620,160 642,428 625,420" fill="#b87400" />
      <polygon points="328,365 1000,548 1022,830 985,805 745,1062 405,960 385,640 340,612" fill="url(#ff)" />
      <polygon points="1000,548 1010,555 1022,815 1012,815" fill="#c27c00" />
      <polygon points="385,640 398,640 418,955 405,955" fill="#c07c00" />
      <polygon points="150,880 340,660 385,635 408,955" fill="#d28600" />
      <polygon points="85,885 350,612 382,632 150,880 745,1052 985,808 1018,820 755,1100" fill="#f7ae00" stroke="#f7ae00" strokeWidth="10" />
      <polygon points="85,890 755,1100 790,1500 120,1300" fill="url(#ff)" />
      <polygon points="85,890 96,892 130,1302 120,1300" fill="#c07c00" />
      <polygon points="755,1100 775,1085 812,1480 790,1500" fill="#bf7a00" />
      <polyline points="118,1300 790,1500 1285,1015" fill="none" stroke="#ee9d00" strokeWidth="8" />
      <polyline points="1280,1015 1445,1060 1478,1030" fill="none" stroke="#ee9d00" strokeWidth="6" />
      {[[0, 0], [35, 435]].map(([x, y], i) => (
        <g key={i} transform={`translate(${x} ${y})`} fill="none" stroke="#f9b30a">
          <path d="M1285 460c-15 35 30 75 70 70" strokeWidth="16" />
          <path d="M1325 460c-5 20 10 30 27 30" strokeWidth="10" />
        </g>
      ))}
    </g>
  </svg>
);

const Triad = () => (
  <svg viewBox="0 0 80 80" width="80" height="80" className="absolute left-[24px] top-[601px]">
    <polygon points="28,43 41,37 57,43 57,58 43,66 28,58" fill="#c8cacc" fillOpacity=".8" stroke="#a8abae" />
    <path d="M28 43l15 7v16M43 50l14-7" fill="none" stroke="#a8abae" />
    <path d="M42 12v34" stroke="#3b66d0" strokeOpacity=".6" strokeWidth="2" />
    <polygon points="39,18 45,18 42,8" fill="#1f3fb8" />
    <path d="M42 52l22 6" stroke="#2f9a4a" strokeOpacity=".6" strokeWidth="2" />
    <polygon points="60,55 62,61 74,59" fill="#2f8f44" />
    <path d="M42 52L20 66" stroke="#d04444" strokeOpacity=".6" strokeWidth="2" />
    <polygon points="18,62 23,68 13,72" fill="#d04444" />
    <text x="37" y="9" fontSize="11" fill="#1f3fb8" fontFamily="Liberation Sans">Z</text>
    <text x="74" y="65" fontSize="11" fill="#2f8f44" fontFamily="Liberation Sans">Y</text>
    <text x="5" y="78" fontSize="11" fill="#d04444" fontFamily="Liberation Sans">X</text>
  </svg>
);

/* ---- small pieces of ribbon layout ---- */
const Group = ({ cls, label, lcls, children }: { cls: string; label?: string; lcls?: string; children: ReactNode }) => (
  <div className={"mt-[5px] h-[106px] shrink-0 border-r border-[#dcdcdc] flex flex-col " + cls}>
    <div className="h-[90px] flex items-start">{children}</div>
    <div className="h-[16px] flex items-center">
      {label !== undefined && <span className={"text-[17px] leading-[16px] text-[#1f6f87] whitespace-nowrap " + lcls}>{label}</span>}
      <Caret className="ml-auto mr-[9px]" />
    </div>
  </div>
);
const Big = ({ cls, icon, text, caret = true, muted = false }: { cls: string; icon: ReactNode; text: string; caret?: boolean; muted?: boolean }) => (
  <div className={"flex flex-col items-center shrink-0 " + cls}>
    <div className="h-[34px] flex items-center justify-center">{icon}</div>
    <div className={"h-[28px] flex items-center text-[16.5px] whitespace-nowrap " + (muted ? "text-[#c4c6c8]" : "text-[#1c1c1c]")}>{text}</div>
    {caret && <div className="h-[12px] flex items-center"><Caret /></div>}
  </div>
);
const Small = ({ icon, text, caret }: { icon: ReactNode; text: string; caret?: boolean }) => (
  <div className="h-[22px] flex items-center gap-[4px]">
    <div className="w-[17px] flex justify-center">{icon}</div>
    <span className="text-[16.5px] whitespace-nowrap text-[#1c1c1c]">{text}</span>
    {caret && <Caret className="ml-[6px]" />}
  </div>
);
const SmallCol = ({ cls, children }: { cls: string; children: ReactNode }) => (
  <div className={"flex flex-col gap-[7px] shrink-0 " + cls}>{children}</div>
);
const MoreBtn = ({ cls, icon }: { cls: string; icon: ReactNode }) => (
  <div className={"flex flex-col items-center shrink-0 " + cls}>
    <div className="w-full h-[34px] border border-[#dcdcdc] rounded-[3px] flex items-center justify-center">{icon}</div>
    <div className="h-[28px] flex items-center text-[16.5px] whitespace-nowrap text-[#1c1c1c]">更多</div>
    <div className="h-[12px] flex items-center"><Caret /></div>
  </div>
);
const Cell = ({ children }: { children?: ReactNode }) => <div className="w-[23px] h-[32px] flex items-center justify-center shrink-0">{children}</div>;
const Sep = () => <div className="w-[7px] h-[32px] flex items-center justify-center shrink-0"><div className="w-px h-[22px] bg-[#dcdcdc]" /></div>;
const Rows = ({ cls, children }: { cls: string; children: ReactNode }) => <div className={"flex flex-col pt-[2px] " + cls}>{children}</div>;
const Row = ({ children }: { children: ReactNode }) => <div className="flex h-[32px]">{children}</div>;
const Dim = ({ b, c = "#b0576a" }: { b: string; c?: string }) => (
  <div className="flex flex-col items-center font-['Liberation_Sans'] leading-[8px]">
    <span className="text-[8.5px] font-bold text-[#444]">1.00</span>
    <span className="text-[7px] font-bold" style={{ color: c }}>{b}</span>
  </div>
);
const Fit = ({ a, b }: { a: string; b?: string }) => (
  <div className="flex flex-col items-center font-['Liberation_Sans'] leading-[8px] text-[#5a4db5] text-[8.5px] font-bold">
    <span>{a}</span>
    {b && <span className="text-[6.5px]">{b}</span>}
  </div>
);
const HL = ({ cls, children }: { cls: string; children: ReactNode }) => (
  <div className={"w-[39px] h-[38px] bg-[#c9e3e9] border border-[#aed3dc] flex items-center justify-center shrink-0 " + cls}>{children}</div>
);
const TSep = ({ cls }: { cls: string }) => <div className={"w-px bg-[#dcdcdc] shrink-0 " + cls} />;

const Select = ({ cls, text }: { cls: string; text: string }) => (
  <div className={"h-[26px] border border-[#a8a8a8] flex items-center px-[6px] text-[16px] text-[#222] shrink-0 " + cls}>
    <span>{text}</span>
    <svg width="12" height="7" viewBox="0 0 12 7" className="ml-auto mr-[5px]"><polygon points="0,0 12,0 6,7" fill="#222" /></svg>
  </div>
);

const rows: { t: string; i: ReactNode; muted?: boolean; bold?: boolean }[] = [
  { t: "基准坐标系 (0)", i: <CsyS />, muted: true },
  { t: "拉伸 (1)", i: <ExtS /> },
  { t: "拉伸 (2)", i: <ExtS /> },
  { t: "拉伸 (3)", i: <ExtS /> },
  { t: "拉伸 (4)", i: <ExtS /> },
  { t: "拉伸 (5)", i: <ExtS /> },
  { t: "拉伸 (6)", i: <ExtS /> },
  { t: "沉头孔 (7)", i: <CsHole /> },
  { t: "边倒圆 (8)", i: <BlendS /> },
  { t: "边倒圆 (9)", i: <BlendS />, bold: true },
];

const marks = Array.from({ length: 54 });

export default function App() {
  return (
    <div className="relative w-[1903px] h-[974px] overflow-hidden bg-white flex flex-col [font-family:'Noto_Sans','Noto_Sans_CJK_SC',sans-serif]">
      {/* title bar */}
      <div className="h-[34px] flex items-center shrink-0">
        <span className="w-[40px] text-[29px] leading-none font-bold text-[#8b9cac] font-['Liberation_Sans'] tracking-[-1px]">NX</span>
        <TSep cls="h-[24px] ml-[5px]" />
        <Save className="ml-[10px]" />
        <TSep cls="h-[24px] ml-[6px]" />
        <Undo className="ml-[8px]" />
        <Caret className="ml-[10px]" />
        <Redo className="ml-[11px]" />
        <TSep cls="h-[24px] ml-[7px]" />
        <Sciss className="ml-[6px]" />
        <CopyI className="ml-[9px]" />
        <PasteI className="ml-[8px]" />
        <PasteT className="ml-[8px]" />
        <TSep cls="h-[24px] ml-[6px]" />
        <TinyCube className="ml-[6px]" />
        <Caret className="ml-[9px]" />
        <TSep cls="h-[24px] ml-[7px]" />
        <Brush className="ml-[6px]" />
        <TSep cls="h-[24px] ml-[6px]" />
        <SwitchW className="ml-[5px]" />
        <span className="ml-[6px] text-[16px] text-[#222] whitespace-nowrap">切换窗口</span>
        <WinI className="ml-[9px]" />
        <span className="ml-[5px] text-[16px] text-[#222] whitespace-nowrap">窗口</span>
        <Caret className="ml-[5px]" />
        <More className="ml-[8px]" />
        <span className="ml-[555px] text-[17px] text-[#222] whitespace-nowrap">NX 12 - 建模</span>
        <span className="ml-[551px] text-[17px] font-bold tracking-[.3px] text-[#0f9a97] font-['Liberation_Sans'] mt-[4px]">SIEMENS</span>
        <div className="ml-[31px] mt-[9px] w-[10px] h-[2px] bg-[#333]" />
        <svg width="13" height="13" viewBox="0 0 13 13" className="ml-[20px] shrink-0"><path d="M3.5 3V1h9v7h-3M.5 3.5h9v9h-9z" fill="none" stroke="#333" strokeWidth="1.1" /><path d="M.5 4h9" stroke="#333" strokeWidth="2" /></svg>
        <svg width="16" height="14" viewBox="0 0 16 14" className="ml-[19px] shrink-0"><path d="M1 1l12 12M13 1L1 13" stroke="#222" strokeWidth="1.4" /></svg>
      </div>

      {/* tab row */}
      <div className="h-[38px] bg-[#d9d9d9] flex shrink-0 text-[20.5px] text-[#222]">
        <div className="w-[100px] bg-[#4d9fb8] text-white flex items-center justify-center text-[19px] shrink-0">文件(F)</div>
        <div className="w-[69px] ml-[2px] bg-white border-t border-[#c4c4c4] text-[#1f7d93] flex items-center justify-center shrink-0">主页</div>
        <span className="ml-[15px] self-center shrink-0 whitespace-nowrap">曲线</span>
        <span className="ml-[28px] self-center shrink-0 whitespace-nowrap">曲面</span>
        <span className="ml-[26px] self-center shrink-0 whitespace-nowrap">分析</span>
        <span className="ml-[27px] self-center shrink-0 whitespace-nowrap">视图</span>
        <span className="ml-[29px] self-center shrink-0 whitespace-nowrap">渲染</span>
        <span className="ml-[27px] self-center shrink-0 whitespace-nowrap">工具</span>
        <span className="ml-[27px] self-center shrink-0 whitespace-nowrap">应用模块</span>
        <div className="ml-[924px] mt-[5px] w-[177px] h-[27px] bg-white border border-[#a8a8a8] flex items-center pl-[5px] text-[15.5px] text-[#a8a8a8] shrink-0">
          <span>查找命令</span>
          <svg width="16" height="16" viewBox="0 0 16 16" className="ml-auto mr-[3px]"><circle cx="10" cy="6" r="4.5" fill="#fff" stroke="#555" strokeWidth="1.2" /><circle cx="10" cy="6" r="2.5" fill="none" stroke="#999" /><path d="M6.5 9.5L1.5 14.5" stroke="#555" strokeWidth="2" /></svg>
        </div>
        <svg width="32" height="32" viewBox="0 0 32 32" className="ml-[12px] mt-[3px] shrink-0">
          <defs><linearGradient id="fs" x1="0" y1="0" x2="0" y2="1"><stop offset="0" stopColor="#1e62c4" /><stop offset="1" stopColor="#d6e6f6" /></linearGradient></defs>
          <path d="M1 8V1h7M24 1h7v7M1 24v7h7M31 24v7h-7" fill="none" stroke="#8b8b8b" strokeWidth="2.5" />
          <rect x="7" y="7" width="18" height="18" fill="url(#fs)" stroke="#333" strokeWidth="1.5" />
        </svg>
        <svg width="26" height="20" viewBox="0 0 26 20" className="ml-[14px] mt-[10px] shrink-0"><path d="M2 16L13 3l11 13" fill="none" stroke="#333" strokeWidth="5" strokeLinejoin="round" strokeLinecap="round" /><path d="M2 16L13 3l11 13" fill="none" stroke="#fff" strokeWidth="3" strokeLinejoin="round" strokeLinecap="round" /></svg>
        <div className="ml-[15px] mt-[7px] w-[25px] h-[25px] rounded-full bg-[#3566c9] border border-[#a8b8e0] flex items-center justify-center text-white font-bold text-[20px] font-['Liberation_Sans'] shrink-0">?</div>
      </div>

      {/* ribbon */}
      <div className="h-[117px] flex shrink-0 border-b-2 border-[#dcdcdc]">
        <Group cls="w-[171px]" label="直接草图" lcls="ml-[38px]">
          <Big cls="w-[40px] ml-[6px]" icon={<SketchI />} text="草图" caret={false} />
          <div className="ml-[9px] w-[86px] h-[86px] border border-[#dcdcdc] grid grid-cols-2 grid-rows-2 place-items-center shrink-0">
            <GalA /><GalB /><GalC /><GalD />
          </div>
          <div className="w-[24px] flex flex-col items-center shrink-0">
            <div className="h-[28px] flex items-center"><svg width="8" height="5" viewBox="0 0 8 5"><polygon points="0,5 8,5 4,0" fill="#bbb" /></svg></div>
            <div className="h-[28px] flex items-center"><Caret /></div>
            <div className="h-[28px] flex items-center"><More /></div>
          </div>
        </Group>
        <Group cls="w-[457px]" label="特征" lcls="ml-[200px]">
          <Big cls="w-[67px] ml-[13px]" icon={<DatumI />} text="基准平面" />
          <Big cls="w-[36px] ml-[8px]" icon={<ExtrI />} text="拉伸" />
          <Big cls="w-[30px] ml-[8px]" icon={<HoleI />} text="孔" caret={false} />
          <SmallCol cls="ml-[12px] w-[88px]">
            <Small icon={<PatFeat />} text="阵列特征" />
            <Small icon={<Unite />} text="合并" caret />
            <Small icon={<Shell />} text="抽壳" />
          </SmallCol>
          <Big cls="w-[50px] ml-[9px]" icon={<BlendI />} text="边倒圆" />
          <SmallCol cls="ml-[10px] w-[74px]">
            <Small icon={<Chamfer />} text="倒斜角" />
            <Small icon={<Trim />} text="修剪体" />
            <Small icon={<Draft />} text="拔模" />
          </SmallCol>
          <MoreBtn cls="w-[37px] ml-[10px]" icon={<MoreBI />} />
        </Group>
        <Group cls="w-[216px]" label="同步建模" lcls="ml-[62px]">
          <Big cls="w-[51px] ml-[12px]" icon={<MoveFaceI />} text="移动面" caret={false} />
          <SmallCol cls="ml-[10px] w-[95px]">
            <Small icon={<OffsetR />} text="偏置区域" />
            <Small icon={<ReplF />} text="替换面" />
            <Small icon={<DelF />} text="删除面" />
          </SmallCol>
          <MoreBtn cls="w-[38px] ml-[5px]" icon={<SyncI />} />
        </Group>
        <Group cls="w-[105px]" label="标准化..." lcls="ml-[10px]">
          <Rows cls="pl-[5px]">
            <Row><Cell><S1 /></Cell><Cell><S2 /></Cell><Cell><S3 /></Cell><Sep /><Cell><S4 /></Cell></Row>
            <Row><Cell><S5 /></Cell><Cell><S6 /></Cell><Cell><S7 /></Cell><Sep /><Cell><S8 /></Cell></Row>
          </Rows>
        </Group>
        <Group cls="w-[51px]" label="齿..." lcls="ml-[1px]">
          <Rows cls="pl-[3px]">
            <Row><Cell><S9 /></Cell><Cell><S10 /></Cell></Row>
            <Row><Cell><S11 /></Cell></Row>
          </Rows>
        </Group>
        <Group cls="w-[59px]" label="弹..." lcls="ml-[4px]">
          <Rows cls="pl-[3px]">
            <Row><Cell><S12 /></Cell><div className="w-[2px]" /><Cell><S13 /></Cell></Row>
            <Row><Cell><S14 /></Cell><Sep /><Cell><S15 /></Cell></Row>
          </Rows>
        </Group>
        <Group cls="w-[51px]" label="加..." lcls="ml-[1px]">
          <Rows cls="pl-[4px]">
            <Row><Cell><S16 /></Cell><Cell><S17 /></Cell></Row>
            <Row><Cell><S18 /></Cell><Cell><S19 /></Cell></Row>
          </Rows>
        </Group>
        <Group cls="w-[99px]" label="建模工..." lcls="ml-[7px]">
          <Rows cls="pl-[5px]">
            <Row><Cell><S20 /></Cell><Cell><S21 /></Cell><Cell><S22 /></Cell><Cell><S23 /></Cell></Row>
            <Row>
              <Cell><S24 /></Cell><Cell><S25 /></Cell><Sep />
              <Cell>
                <div className="flex flex-col items-center font-['Liberation_Sans'] text-[8.5px] font-bold leading-[9px] text-[#333]">
                  <Binoc />
                  <span>10H7</span>
                </div>
              </Cell>
            </Row>
          </Rows>
        </Group>
        <Group cls="w-[28px]" label="." lcls="ml-[1px]">
          <Rows cls="pl-[4px]">
            <Row><Cell><S27 /></Cell></Row>
            <Row><Cell><S27 /></Cell></Row>
          </Rows>
        </Group>
        <Group cls="w-[288px]" label="尺寸快速格式化工具 - GC工具箱" lcls="ml-[10px]">
          <Rows cls="pl-[3px]">
            <Row>
              <Cell><G1 /></Cell><Sep /><Cell><G2 /></Cell>
              <Cell><Dim b="±.05" /></Cell><Cell><Dim b="±.00" /></Cell><Cell><Dim b="±.00" /></Cell><Cell><Dim b="±.02" /></Cell>
              <Cell><G3 /></Cell><Cell><G4 /></Cell>
              <Cell><Fit a="10H7" /></Cell><Cell><Fit a="10H7" b="(8.01)" /></Cell><Cell><Fit a="10H7" b="(8.015)" /></Cell><Cell><Fit a="10" b="(8.015)" /></Cell>
            </Row>
            <Row><Cell><R1 /></Cell><Cell><R2 /></Cell><Sep /><Cell><R3 /></Cell><Cell><R4 /></Cell><Cell><R5 /></Cell></Row>
          </Rows>
        </Group>
        <div className="mt-[5px] h-[106px] w-[45px] shrink-0 border-r border-[#dcdcdc]">
          <Big cls="w-full" icon={<SurfI />} text="曲面" />
        </div>
        <Group cls="w-[231px]" label="装配" lcls="ml-[88px]">
          <Big cls="w-[67px] ml-[13px]" icon={<ProcI />} text="处理装配" caret={false} muted />
          <Big cls="w-[34px] ml-[9px]" icon={<AddI />} text="添加" />
          <SmallCol cls="ml-[10px] w-[92px]">
            <Small icon={<AssemC />} text="装配约束" />
            <Small icon={<MoveC />} text="移动组件" />
            <Small icon={<PatC />} text="阵列组件" />
          </SmallCol>
        </Group>
        <Group cls="w-[57px]" label="分..." lcls="ml-[3px]">
          <Big cls="w-[36px] ml-[12px]" icon={<RulerI />} text="测量" caret={false} />
        </Group>
        <div className="flex-1 flex justify-end items-end pb-[9px]"><Caret className="-mr-[4px]" /></div>
      </div>

      {/* toolbar */}
      <div className="h-[64px] flex items-center shrink-0 border-b-2 border-[#a8a8a8]">
        <MenuI className="ml-[6px]" />
        <span className="ml-[4px] text-[16px] text-[#222] whitespace-nowrap">菜单(<span className="underline">M</span>)</span>
        <Caret className="ml-[4px]" />
        <TSep cls="h-[46px] ml-[10px]" />
        <Select cls="w-[192px] ml-[11px]" text="无选择过滤器" />
        <Select cls="w-[202px] ml-[9px]" text="整个装配" />
        <T1 className="ml-[8px]" />
        <T2 className="ml-[13px]" />
        <T3 className="ml-[11px]" />
        <Caret className="ml-[7px]" />
        <T4 className="ml-[11px]" />
        <T5 className="ml-[11px]" />
        <T6 className="ml-[10px]" />
        <T7 className="ml-[10px]" />
        <Caret className="ml-[9px]" />
        <T8 className="ml-[10px]" />
        <T9 className="ml-[9px]" />
        <HL cls="ml-[8px]"><H1 /></HL>
        <HL cls="ml-px"><L1 /></HL>
        <HL cls="ml-[3px]"><L2 /></HL>
        <L3 className="ml-[5px]" />
        <HL cls="ml-[10px]"><L4 /></HL>
        <HL cls="ml-px"><L5 /></HL>
        <L6 className="ml-[7px]" />
        <HL cls="ml-[5px]"><L7 /></HL>
        <L8 className="ml-[8px]" />
        <HL cls="ml-[6px]"><L9 /></HL>
        <HL cls="ml-[3px]"><L10 /></HL>
        <Surf2 className="ml-[4px]" />
        <div className="ml-[11px] w-[24px] flex flex-col gap-[8px] items-center shrink-0">
          <TopA /><TopB />
        </div>
        <TSep cls="h-[46px] ml-[10px]" />
        <Z1 className="ml-[13px]" />
        <Z2 className="ml-[10px]" />
        <Z3 className="ml-[10px]" />
        <Z4 className="ml-[12px]" />
        <Z5 className="ml-[11px]" />
        <Z6 className="ml-[13px]" />
        <Caret className="ml-[11px]" />
        <Z7 className="ml-[10px]" />
        <Caret className="ml-[9px]" />
        <div className="ml-[12px] w-[39px] flex flex-col gap-[6px] shrink-0">
          <div className="flex items-center gap-[9px]"><Z8 /><Caret /></div>
          <div className="flex items-center gap-[9px]"><Z9 /><Caret /></div>
        </div>
        <TSep cls="h-[46px] ml-[11px]" />
        <div className="flex-1 flex justify-end self-end pb-[12px]"><Caret className="-mr-[4px]" /></div>
      </div>

      {/* main */}
      <div className="flex-1 flex min-h-0">
        {/* side tabs */}
        <div className="w-[36px] bg-[#d9d9d9] border-r border-[#a8a8a8] shrink-0 flex flex-col items-center">
          <Gear className="mt-[4px]" />
          <SB1 className="mt-[34px]" />
          <SB2 className="mt-[19px]" />
          <div className="mt-[8px] w-[36px] -mr-px h-[53px] bg-white border-y border-[#a8a8a8] flex items-center justify-center shrink-0"><SB3 /></div>
          <SB4 className="mt-[9px]" />
          <SB5 className="mt-[29px]" />
          <SB6 className="mt-[29px]" />
          <SB7 className="mt-[30px]" />
          <SB8 className="mt-[19px]" />
          <SB9 className="mt-[19px]" />
        </div>

        {/* navigator */}
        <div className="w-[285px] shrink-0 border-r-2 border-[#a0a0a0] bg-white flex flex-col text-[17.5px] text-[#222]">
          <div className="h-[35px] flex items-center pl-[10px] shrink-0">
            <span className="text-[18px]">部件导航器</span>
            <div className="ml-[150px] w-[16px] h-[14px] border border-[#333] border-t-[3px]" />
          </div>
          <div className="ml-[7px] w-[267px] h-[354px] border border-[#d8d8d8] shrink-0 flex flex-col">
            <div className="h-[30px] bg-[#efefef] flex items-center shrink-0">
              <div className="w-[199px] h-full flex items-center pl-[6px] border-r border-[#d0d0d0]">
                <span className="text-[18px]">名称</span>
                <svg width="13" height="7" viewBox="0 0 13 7" className="ml-[20px]"><polygon points="0,7 13,7 6.5,0" fill="#222" /></svg>
              </div>
              <span className="ml-[6px] text-[18px]">最新</span>
            </div>
            <div className="h-[298px] flex overflow-hidden shrink-0">
              <div className="w-[241px] shrink-0 relative overflow-hidden">
                <div className="h-[28px] flex items-center border-b border-[#ececec]">
                  <div className="ml-[4px] w-[12px] h-[12px] border border-[#cfcfcf] flex items-center justify-center"><div className="w-[8px] h-px bg-[#555]" /></div>
                  <Folder className="ml-[3px]" />
                  <span className="ml-[3px] whitespace-nowrap">模型历史记录</span>
                  <div className="ml-auto w-px h-full bg-[#e6e6e6] mr-[41px]" />
                </div>
                <div className="absolute left-[28px] top-[28px] bottom-0 border-l border-dotted border-[#999]" />
                {rows.map((r, i) => (
                  <div key={r.t} className={"h-[28px] flex items-center border-b border-[#ececec] " + (i % 2 === 0 ? "bg-[#f8f8f8]" : "bg-white")}>
                    <div className="ml-[29px] w-[10px] border-t border-dotted border-[#999]" />
                    <Chk className="ml-[1px]" />
                    <div className="ml-[2px] w-[16px]">{r.i}</div>
                    <span className={"ml-[3px] whitespace-nowrap " + (r.muted ? "text-[#a9a9a9]" : "") + (r.bold ? " font-bold" : "")}>{r.t}</span>
                    <div className="ml-auto w-[41px] h-full border-l border-[#e6e6e6] flex items-center pl-[5px]"><Green /></div>
                  </div>
                ))}
              </div>
              <div className="w-[24px] bg-[#f2f2f2] flex flex-col items-center shrink-0">
                <Arrow d="u" s={14} className="mt-[8px]" w={2.8} />
                <div className="mt-[34px] w-full h-[188px] bg-[#c8c8c8]" />
                <Arrow d="d" s={14} className="mt-[25px]" w={2.8} />
              </div>
            </div>
            <div className="h-[24px] bg-[#f2f2f2] flex items-center shrink-0">
              <Arrow d="l" s={14} className="ml-[7px]" w={2.8} />
              <div className="ml-[5px] w-[111px] h-full bg-[#c8c8c8]" />
              <Arrow d="r" s={14} className="ml-[81px]" w={2.8} />
            </div>
          </div>
          <div className="ml-[6px] mt-[1px] w-[269px] h-[4px] bg-[#d0d0d0] border border-[#aaa] shrink-0" />
          <div className="ml-[6px] w-[269px] flex-1 min-h-0 border-l border-[#e0e0e0] flex flex-col text-[#1f6f87] text-[20px]">
            <div className="h-[31px] flex items-center border-b-2 border-[#cfcfcf] shrink-0">
              <span className="ml-[9px] mt-[7px] tracking-[1px]">相关性</span>
              <Arrow d="d" s={20} className="ml-auto mr-[-3px]" w={2.8} c="#17607a" />
            </div>
            <div className="h-[32px] flex items-center border-b-[3px] border-[#d4d4d4] shrink-0">
              <span className="ml-[8px] mt-[5px]">细节</span>
              <Arrow d="d" s={20} className="ml-auto mr-[-3px]" w={2.8} c="#17607a" />
            </div>
            <div className="h-[31px] flex items-center shrink-0">
              <span className="ml-[8px] mt-[5px]">预览</span>
              <Arrow d="u" s={20} className="ml-auto mr-[-3px]" w={2.8} c="#17607a" />
            </div>
            <div className="ml-[14px] mt-[6px] w-[247px] h-[185px] border border-[#d6d6d6] flex items-center justify-center text-[18px] text-[#222] shrink-0">没有可用的预览</div>
            <div className="mt-[28px] h-[14px] border-t border-[#d6d6d6] bg-[#f3f3f3] flex items-start shrink-0 overflow-hidden">
              <Arrow d="l" s={14} className="ml-[7px] mt-[4px]" w={2.8} />
              <div className="ml-[5px] w-[210px] h-full bg-[#c8c8c8]" />
              <Arrow d="r" s={14} className="ml-[5px] mt-[4px]" w={2.8} />
            </div>
          </div>
        </div>

        {/* graphics */}
        <div className="flex-1 flex flex-col min-w-0">
          <div className="h-[32px] flex shrink-0 bg-white">
            <div className="w-[220px] bg-[#5aa3bb] flex items-center text-white text-[18px]">
              <svg width="16" height="16" viewBox="0 0 16 16" className="ml-[7px] shrink-0"><polygon points="8,1 15,4 15,11 8,15 1,11 1,5" fill="#2440c8" /><path d="M5 4v7l6-2V7H7.5V4z" fill="#dfe6fb" /></svg>
              <span className="ml-[4px] whitespace-nowrap">鼠标遥控器托盘.prt</span>
              <svg width="10" height="10" viewBox="0 0 10 10" className="ml-[7px] shrink-0"><path d="M1 1h5l3 3v5H1z" fill="#fff" /><path d="M3 3h3l1 1v3H3z" fill="#5aa3bb" /></svg>
              <svg width="10" height="10" viewBox="0 0 10 10" className="ml-[8px] shrink-0"><path d="M1 1l8 8M9 1L1 9" stroke="#fff" strokeWidth="2" /></svg>
            </div>
          </div>
          <div className="flex-1 relative bg-[linear-gradient(180deg,#b3b4b6_0%,#c8c9cb_30%,#dcdde0_58%,#ebebeb_100%)] border-l border-[#a0a0a0]">
            <Model />
            <Triad />
          </div>
        </div>
      </div>

      {/* watermark overlay */}
      <div className="absolute left-[27px] top-[30px] pointer-events-none grid grid-cols-[repeat(9,208px)] auto-rows-[160px] select-none">
        {marks.map((_, i) => (
          <div key={i} className="w-[208px] h-[160px] flex items-center">
            <div className="ml-[23px] -rotate-[28deg] origin-[27px_50%] flex items-center gap-[3px] text-white/15 [text-shadow:0_0_1px_rgba(110,110,110,.16)]">
              <span className="text-[40px] leading-none font-bold font-['Liberation_Sans']">3D</span>
              <div className="flex flex-col items-start leading-none">
                <span className="text-[15px] font-bold whitespace-nowrap">打印资源库</span>
                <span className="text-[9px] mt-[2px] whitespace-nowrap font-['Liberation_Sans']">www.3dzyk.cn</span>
              </div>
            </div>
          </div>
        ))}
      </div>
    </div>
  );
}
